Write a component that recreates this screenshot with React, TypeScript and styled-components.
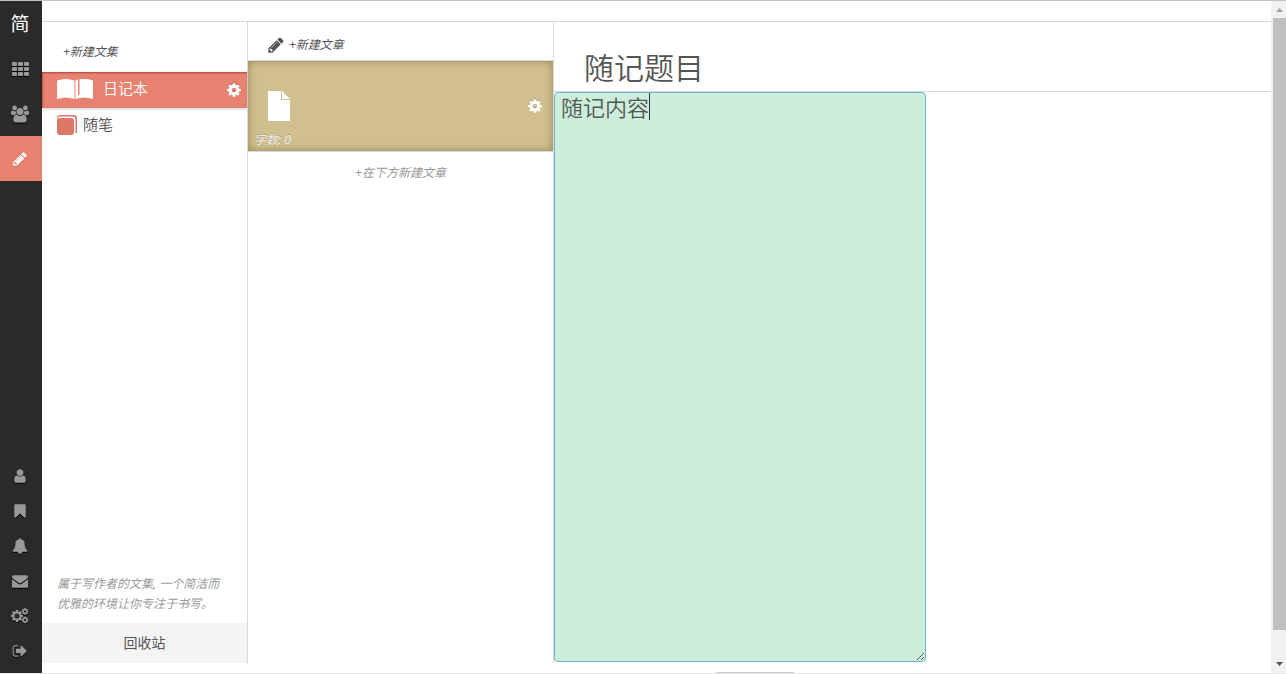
import React, { useState } from "react";
import styled, { createGlobalStyle, css } from "styled-components";

const GlobalStyle = createGlobalStyle`
  *, *::before, *::after { box-sizing: border-box; }
  html, body { margin: 0; height: 100%; overflow: hidden; }
  #root { height: 100%; }
  body, button, input, textarea {
    font-family: "Noto Sans", "Noto Sans CJK SC", sans-serif;
    font-weight: 350;
    color: #555;
  }
  button { border: 0; padding: 0; background: none; cursor: pointer; }
  a { color: inherit; text-decoration: none; }
`;

const Page = styled.div`
  display: flex;
  height: 100vh;
  border-top: 1px solid #c3c3c3;
  border-bottom: 1px solid #e6e6e6;
  background: #fff;
`;

const Sidebar = styled.nav`
  display: flex;
  flex-direction: column;
  flex: none;
  width: 42px;
  padding-bottom: 5px;
  background: #2a2a2a;
`;

const NavLink = styled.a<{ $active?: boolean; $small?: boolean }>`
  display: flex;
  align-items: center;
  justify-content: center;
  height: ${(p) => (p.$small ? 35 : 45)}px;
  padding-right: 2px;
  color: ${(p) => (p.$active ? "#fff" : "#999")};
  background: ${(p) => (p.$active ? "#e78170" : "transparent")};
  svg { filter: drop-shadow(0 1px 0 ${(p) => (p.$active ? "#c96b5c" : "#000")}); }
`;

const Brand = styled(NavLink)`
  color: #fff;
  font-size: 19px;
  font-weight: 400;
  line-height: 24px;
`;

const Spacer = styled.div`
  flex: 1;
`;

const Workspace = styled.div`
  display: flex;
  flex-direction: column;
  flex: 1;
  min-width: 0;
`;

const TopBar = styled.header`
  flex: none;
  height: 21px;
  border-bottom: 1px solid #d9d9d9;
`;

const Columns = styled.div`
  display: flex;
  flex: 1;
  min-height: 0;
`;

const Column = styled.section<{ $width: number }>`
  display: flex;
  flex-direction: column;
  flex: none;
  width: ${(p) => p.$width}px;
  margin-bottom: 10px;
  border-right: 1px solid #d9d9d9;
`;

const TextButton = styled.button<{ $muted?: boolean }>`
  display: flex;
  align-items: center;
  gap: 4px;
  font-size: 12px;
  font-weight: 400;
  line-height: 20px;
  font-style: italic;
  color: ${(p) => (p.$muted ? "#999" : "#555")};
`;

const NewNotebook = styled.div`
  height: 50px;
  padding: 20px 21px 0;
`;

const List = styled.ul`
  margin: 0;
  padding: 0;
  list-style: none;
`;

const NotebookRow = styled.li<{ $active?: boolean }>`
  display: flex;
  align-items: center;
  justify-content: space-between;
  height: 36px;
  padding: 0 5px 0 15px;
  ${(p) =>
    p.$active &&
    css`
      color: #fff;
      background: #e78170;
      box-shadow: inset 0 2px 2px -1px #a8483c, inset 2px 0 2px -1px #b9594b, 0 1px 3px rgba(0, 0, 0, 0.2);
    `}
`;

const NotebookLink = styled.a<{ $open?: boolean }>`
  display: flex;
  align-items: center;
  gap: ${(p) => (p.$open ? 10 : 6)}px;
  padding-bottom: 2px;
  font-size: 15px;
  line-height: 20px;
`;

const NotebookName = styled.span`
  padding-bottom: 2px;
`;

const IconButton = styled.button`
  display: flex;
  color: #fff;
  svg { filter: drop-shadow(0 -1px 0 rgba(0, 0, 0, 0.2)); }
`;

const Hint = styled.p`
  margin: 0;
  padding: 0 20px 9px 15px;
  font-size: 12px;
  font-weight: 400;
  line-height: 20px;
  font-style: italic;
  color: #999;
`;

const Trash = styled.button`
  height: 40px;
  font-size: 14px;
  font-weight: 400;
  line-height: 20px;
  background: #f4f4f4;
`;

const NewArticle = styled.div`
  display: flex;
  align-items: center;
  height: 39px;
  padding: 7px 19px 0;
  border-bottom: 1px solid #d9d9d9;
`;

const ArticleCard = styled.article`
  display: flex;
  flex-direction: column;
  height: 91px;
  padding: 30px 10px 0 6px;
  color: #fff;
  background: #d0c090;
  border-bottom: 1px solid #d9d9d9;
  box-shadow: inset 0 0 8px rgba(110, 90, 40, 0.6);
`;

const ArticleMain = styled.div`
  display: flex;
  align-items: center;
  justify-content: space-between;
  padding-left: 14px;
`;

const WordCount = styled.span`
  margin-top: 9px;
  font-size: 12px;
  font-weight: 400;
  line-height: 20px;
  font-style: italic;
  color: #eee;
  text-shadow: 0 -1px 0 rgba(0, 0, 0, 0.2);
`;

const Below = styled.div`
  display: flex;
  justify-content: center;
  padding-top: 11px;
`;

const Editor = styled.main`
  display: flex;
  flex-direction: column;
  flex: 1;
  min-width: 0;
`;

const TitleInput = styled.input`
  flex: none;
  width: 100%;
  height: 70px;
  padding: 18px 30px 0;
  border: 0;
  border-bottom: 1px solid #d9d9d9;
  outline: 0;
  font-size: 30px;
  line-height: 40px;
`;

const ContentWrap = styled.div`
  position: relative;
  display: flex;
  flex: 1;
  min-height: 0;
`;

const ContentInput = styled.textarea`
  width: 372px;
  height: 100%;
  padding: 0 6px;
  border: 1px solid #6cb4e0;
  border-radius: 4px;
  outline: 0;
  background: #cceedb;
  font-size: 22px;
  line-height: 28px;
  caret-color: transparent;
  resize: both;
`;

const Caret = styled.span`
  position: absolute;
  top: 1px;
  width: 1px;
  height: 27px;
  background: #333;
  pointer-events: none;
`;

const Footer = styled.footer`
  display: flex;
  align-items: flex-end;
  flex: none;
  height: 11px;
  padding-left: 162px;
`;

const Handle = styled.div`
  width: 78px;
  height: 1px;
  background: #ccc;
`;

const Scrollbar = styled.div`
  display: flex;
  flex-direction: column;
  align-items: center;
  flex: none;
  width: 15px;
  padding: 7px 0 7px 2px;
  gap: 6px;
  background: #f1f1f1;
`;

const Thumb = styled.div`
  width: 100%;
  flex: 1;
  margin-bottom: 26px;
  background: #c1c1c1;
`;

const paths = {
  pencil:
    "M491 1536l91-91-235-235-91 91v107h128v128h107zm523-928q0-22-22-22-10 0-17 7l-542 542q-7 7-7 17 0 22 22 22 10 0 17-7l542-542q7-7 7-17zm-54-192l416 416-832 832h-416v-416zm683 96q0 53-37 90l-166 166-416-416 166-165q36-38 90-38 53 0 91 38l235 234q37 39 37 91z",
  user:
    "M1536 1399q0 109-62.5 187t-150.5 78h-854q-88 0-150.5-78t-62.5-187q0-85 8.5-160.5t31.5-152 58.5-131 94-89 134.5-34.5q131 128 313 128t313-128q76 0 134.5 34.5t94 89 58.5 131 31.5 152 8.5 160.5zm-256-887q0 159-112.5 271.5t-271.5 112.5-271.5-112.5-112.5-271.5 112.5-271.5 271.5-112.5 271.5 112.5 112.5 271.5z",
  bookmark:
    "M1420 128q23 0 44 9 33 13 52.5 41t19.5 62v1289q0 34-19.5 62t-52.5 41q-19 8-44 8-48 0-83-32l-441-424-441 424q-36 33-83 33-23 0-44-9-33-13-52.5-41t-19.5-62v-1289q0-34 19.5-62t52.5-41q21-9 44-9h1048z",
  bell:
    "M912 1696q0-16-16-16-59 0-101.5-42.5t-42.5-101.5q0-16-16-16t-16 16q0 73 51.5 124.5t124.5 51.5q16 0 16-16zm816-288q0 52-38 90t-90 38h-448q0 106-75 181t-181 75-181-75-75-181h-448q-52 0-90-38t-38-90q50-42 91-88t85-119.5 74.5-158.5 50-206 19.5-260q0-152 117-282.5t307-158.5q-8-19-8-39 0-40 28-68t68-28 68 28 28 68q0 20-8 39 190 28 307 158.5t117 282.5q0 139 19.5 260t50 206 74.5 158.5 85 119.5 91 88z",
  envelope:
    "M1792 710v794q0 66-47 113t-113 47h-1472q-66 0-113-47t-47-113v-794q44 49 101 87 362 246 497 345 57 42 92.5 65.5t94.5 48 110 24.5h2q51 0 110-24.5t94.5-48 92.5-65.5q170-123 498-345 57-39 100-87zm0-294q0 79-49 151t-122 123q-376 261-468 325-10 7-42.5 31t-54 38.5-52 32.5-57.5 27-50 9h-2q-23 0-50-9t-57.5-27-52-32.5-54-38.5-42.5-31q-91-64-262-182.5t-205-142.5q-62-42-117-115.5t-55-136.5q0-78 41.5-130t118.5-52h1472q65 0 112.5 47t47.5 113z",
  cog:
    "M1152 896q0-106-75-181t-181-75-181 75-75 181 75 181 181 75 181-75 75-181zm512-109v222q0 12-8 23t-20 13l-185 28q-19 54-39 91 35 50 107 138 10 12 10 25t-9 23q-27 37-99 108t-94 71q-12 0-26-9l-138-108q-44 23-91 38-16 136-29 186-7 28-36 28h-222q-14 0-24.5-8.5t-11.5-21.5l-28-184q-49-16-90-37l-141 107q-10 9-25 9-14 0-25-11-126-114-165-168-7-10-7-23 0-12 8-23 15-21 51-66.5t54-70.5q-27-50-41-99l-183-27q-13-2-21-12.5t-8-23.5v-222q0-12 8-23t19-13l186-28q14-46 39-92-40-57-107-138-10-12-10-24 0-10 9-23 26-36 98.5-107.5t94.5-71.5q13 0 26 10l138 107q44-23 91-38 16-136 29-186 7-28 36-28h222q14 0 24.5 8.5t11.5 21.5l28 184q49 16 90 37l142-107q9-9 24-9 13 0 25 10 129 119 165 170 7 8 7 22 0 12-8 23-15 21-51 66.5t-54 70.5q26 50 41 98l183 28q13 2 21 12.5t8 23.5z",
  signOut:
    "M704 1440q0 4 1 20t.5 26.5-3 23.5-10 19.5-20.5 6.5h-320q-119 0-203.5-84.5t-84.5-203.5v-704q0-119 84.5-203.5t203.5-84.5h320q13 0 22.5 9.5t9.5 22.5q0 4 1 20t.5 26.5-3 23.5-10 19.5-20.5 6.5h-320q-66 0-113 47t-47 113v704q0 66 47 113t113 47h312l11.5 1 11.5 3 8 5.5 7 9 2 13.5zm928-544q0 26-19 45l-544 544q-19 19-45 19t-45-19-19-45v-288h-448q-26 0-45-19t-19-45v-384q0-26 19-45t45-19h448v-288q0-26 19-45t45-19 45 19l544 544q19 19 19 45z",
  users:
    "M529 896q-162 5-265 128h-134q-82 0-138-40.5t-56-118.5q0-353 124-353 6 0 43.5 21t97.5 42.5 119 21.5q67 0 133-23-5 37-5 66 0 139 81 256zm1071 637q0 120-73 189.5t-194 69.5h-874q-121 0-194-69.5t-73-189.5q0-53 3.5-103.5t14-109 26.5-108.5 43-97.5 62-81 85.5-53.5 111.5-20q10 0 43 21.5t73 48 107 48 135 21.5 135-21.5 107-48 73-48 43-21.5q61 0 111.5 20t85.5 53.5 62 81 43 97.5 26.5 108.5 14 109 3.5 103.5zm-1024-1277q0 106-75 181t-181 75-181-75-75-181 75-181 181-75 181 75 75 181zm704 384q0 159-112.5 271.5t-271.5 112.5-271.5-112.5-112.5-271.5 112.5-271.5 271.5-112.5 271.5 112.5 112.5 271.5zm576 225q0 78-56 118.5t-138 40.5h-134q-103-123-265-128 81-117 81-256 0-29-5-66 66 23 133 23 59 0 119-21.5t97.5-42.5 43.5-21q124 0 124 353zm-128-609q0 106-75 181t-181 75-181-75-75-181 75-181 181-75 181 75 75 181z",
};

function Icon({ name, size = 16 }: { name: keyof typeof paths; size?: number }) {
  return (
    <svg width={size} height={size} viewBox={name === "users" ? "-64 0 1920 1792" : "0 0 1792 1792"} fill="currentColor" aria-hidden>
      <path d={paths[name]} />
    </svg>
  );
}

function GridIcon() {
  return (
    <svg width="17" height="14" viewBox="0 0 17 14" fill="currentColor" aria-hidden>
      {[0, 5, 10].map((y) => [0, 6, 12].map((x) => <rect key={`${x}-${y}`} x={x} y={y} width="5" height="4" rx="1" />))}
    </svg>
  );
}

function CogsIcon() {
  return (
    <svg width="18" height="16" viewBox="0 0 18 16" fill="currentColor" aria-hidden>
      <path d={paths.cog} transform="translate(-1 1) scale(.0078)" />
      <circle cx="6" cy="8" r="2.600" fill="#2a2a2a" />
      <path d={paths.cog} transform="translate(10 -.5) scale(.0045)" />
      <path d={paths.cog} transform="translate(10 8) scale(.0045)" />
    </svg>
  );
}

function OpenBookIcon() {
  return (
    <svg width="36" height="20" viewBox="0 0 36 20" fill="currentColor" aria-hidden>
      <path d="M0 1.500Q9-1.500 17.500 1.500V20Q9 17 0 20Z" />
      <path d="M18.500 1.500L21 .5V16H22.500V.2Q29-.8 36 1.500V20Q27 17 18.500 20Z" />
    </svg>
  );
}

function ClosedBookIcon() {
  return (
    <svg width="20" height="20" viewBox="0 0 20 20" fill="#dd7768" aria-hidden>
      <rect y="3" width="17" height="17" rx="3" />
      <path d="M0 5V3Q0 0 3 0H17Q20 0 20 3V18H18.500V4Q18.500 1.500 16 1.500H3Q1 1.500 0 5Z" />
    </svg>
  );
}

function DocumentIcon() {
  return (
    <svg width="22" height="30" viewBox="0 0 22 30" fill="currentColor" aria-hidden>
      <path d="M0 0H13V9H22V30H0Z" />
      <path d="M14 0L22 8H14Z" />
    </svg>
  );
}

const contentTextSize = 22;
const contentInset = 7;

export default function App() {
  const [title, setTitle] = useState("随记题目");
  const [content, setContent] = useState("随记内容");

  return (
    <>
      <GlobalStyle />
      <Page>
        <Sidebar>
          <Brand href="#">简</Brand>
          <NavLink href="#" aria-label="专题"><GridIcon /></NavLink>
          <NavLink href="#" aria-label="好友"><Icon name="users" size={18} /></NavLink>
          <NavLink href="#" $active aria-label="写作"><Icon name="pencil" /></NavLink>
          <Spacer />
          <NavLink href="#" $small aria-label="用户"><Icon name="user" /></NavLink>
          <NavLink href="#" $small aria-label="书签"><Icon name="bookmark" /></NavLink>
          <NavLink href="#" $small aria-label="通知"><Icon name="bell" /></NavLink>
          <NavLink href="#" $small aria-label="私信"><Icon name="envelope" /></NavLink>
          <NavLink href="#" $small aria-label="设置"><CogsIcon /></NavLink>
          <NavLink href="#" $small aria-label="退出"><Icon name="signOut" /></NavLink>
        </Sidebar>
        <Workspace>
          <TopBar />
          <Columns>
            <Column $width={206}>
              <NewNotebook>
                <TextButton>+新建文集</TextButton>
              </NewNotebook>
              <List>
                <NotebookRow $active>
                  <NotebookLink href="#" $open><OpenBookIcon /><NotebookName>日记本</NotebookName></NotebookLink>
                  <IconButton aria-label="文集设置"><Icon name="cog" /></IconButton>
                </NotebookRow>
                <NotebookRow>
                  <NotebookLink href="#"><ClosedBookIcon /><NotebookName>随笔</NotebookName></NotebookLink>
                </NotebookRow>
              </List>
              <Spacer />
              <Hint>属于写作者的文集, 一个简洁而优雅的环境让你专注于书写。</Hint>
              <Trash>回收站</Trash>
            </Column>
            <Column $width={306}>
              <NewArticle>
                <TextButton><Icon name="pencil" size={18} />+新建文章</TextButton>
              </NewArticle>
              <ArticleCard>
                <ArticleMain>
                  <DocumentIcon />
                  <IconButton aria-label="文章设置"><Icon name="cog" /></IconButton>
                </ArticleMain>
                <WordCount>字数: 0</WordCount>
              </ArticleCard>
              <Below>
                <TextButton $muted>+在下方新建文章</TextButton>
              </Below>
            </Column>
            <Editor>
              <TitleInput aria-label="标题" value={title} onChange={(e) => setTitle(e.target.value)} />
              <ContentWrap>
                <ContentInput
                  aria-label="内容"
                  value={content}
                  onChange={(e) => setContent(e.target.value)}
                />
                <Caret style={{ left: contentInset + content.length * contentTextSize }} />
              </ContentWrap>
              <Footer><Handle /></Footer>
            </Editor>
          </Columns>
        </Workspace>
        <Scrollbar aria-hidden>
          <svg width="7" height="4" viewBox="0 0 7 4" fill="#a3a3a3"><path d="M0 4L3.500 0L7 4Z" /></svg>
          <Thumb />
          <svg width="7" height="4" viewBox="0 0 7 4" fill="#505050"><path d="M0 0L3.500 4L7 0Z" /></svg>
        </Scrollbar>
      </Page>
    </>
  );
}
